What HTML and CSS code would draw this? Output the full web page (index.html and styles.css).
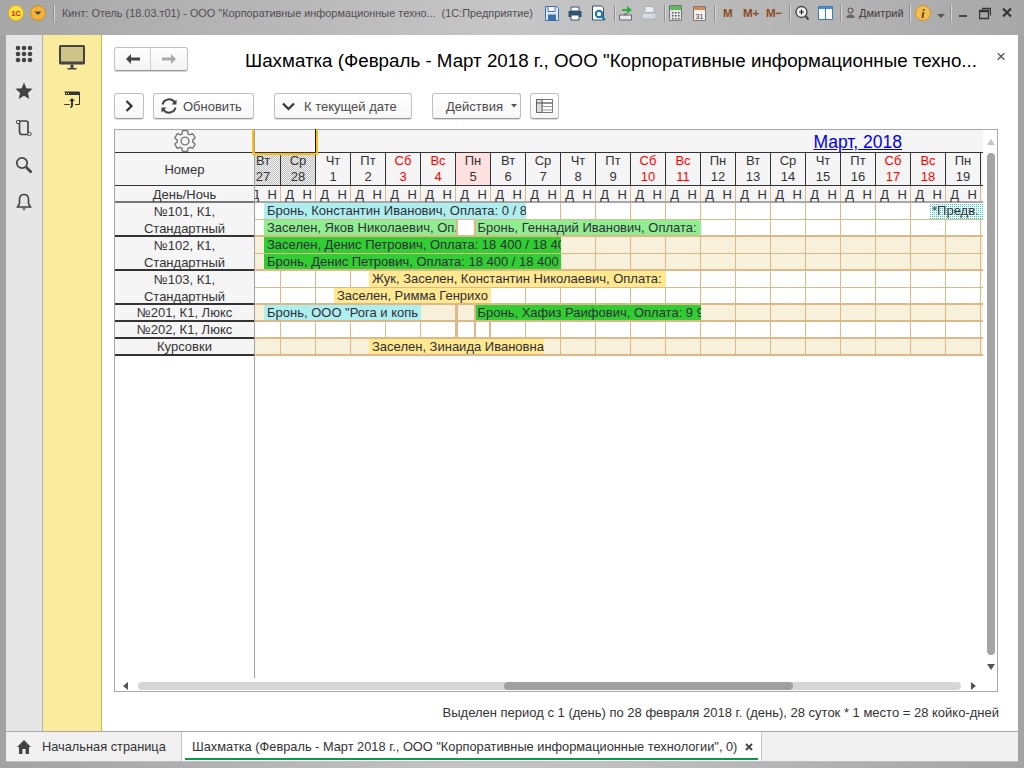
FILE: index.html
```html
<!DOCTYPE html>
<html lang="ru">
<head>
<meta charset="utf-8">
<title>Шахматка</title>
<link rel="stylesheet" href="styles.css">
</head>
<body>
<div class="window">
  <header class="titlebar">
    <svg class="i16" viewBox="0 0 16 16"><circle cx="8" cy="8" r="7.5" fill="#fde23a" stroke="#e0b020"/><text x="8" y="10.5" class="logo1c">1С</text></svg>
    <svg class="i16 m6" viewBox="0 0 16 16"><circle cx="8" cy="8" r="7.5" fill="#f2b33c" stroke="#c98a20"/><path d="M4.5 6.5h7L8 10z" fill="#444"/></svg>
    <span class="sep m7"></span>
    <span class="apptitle">Кинт: Отель (18.03.т01) - ООО "Корпоративные информационные техно...  (1С:Предприятие)</span>
    <svg class="w14" viewBox="0 0 14 16"><path d="M.5 1.500h11l2 2v12H.5z" fill="#dfe8f2" stroke="#3d6fa8"/><path d="M3 1.500h7v5H3z" fill="#fff" stroke="#3d6fa8"/><path d="M3 9.500h8v6H3z" fill="#3d6fa8"/></svg>
    <svg class="w14 m9" viewBox="0 0 14 16"><path d="M3 2h8v4H3z" fill="#fff" stroke="#32536f"/><path d="M.5 6h13v6H.5z" fill="#32536f"/><path d="M3 10h8v5H3z" fill="#fff" stroke="#32536f"/></svg>
    <svg class="w14 m10" viewBox="0 0 14 16"><path d="M.5 1h9l2 2v12H.5z" fill="#fff" stroke="#32536f"/><circle cx="7" cy="9" r="3.200" fill="#fff" stroke="#1c6ea8" stroke-width="2"/><path d="M9.500 11.500l3.500 3.500" stroke="#1c6ea8" stroke-width="2"/></svg>
    <span class="sep m8"></span>
    <svg class="w15 m3" viewBox="0 0 15 16"><path d="M4 4h5V1l5 4-5 4V6H4z" fill="#2fae3c"/><path d="M1.500 10h12v5h-12z" fill="#e6e6e6" stroke="#667"/><path d="M6 8h3v3H6z" fill="#889"/></svg>
    <svg class="w16 m8" viewBox="0 0 16 16"><path d="M4 1.500h7l2 2v4H4z" fill="#eee" stroke="#aab2bb"/><path d="M1 8h14v6H1z" fill="#d5dae0" stroke="#aab2bb"/></svg>
    <span class="sep m7"></span>
    <svg class="w13 m4" viewBox="0 0 13 16"><path d="M.5.500h12v15H.5z" fill="#e4e4e4" stroke="#777"/><path d="M1 1h11v4H1z" fill="#5fb760"/><path d="M3 7h1.500v1.500H3zM6 7h1.500v1.500H6zM9 7h1.500v1.500H9zM3 10h1.500v1.500H3zM6 10h1.500v1.500H6zM9 10h1.500v1.500H9zM3 13h1.500v1.500H3zM6 13h1.500v1.500H6zM9 13h1.500v1.500H9z" fill="#555"/></svg>
    <svg class="w13 m11" viewBox="0 0 13 16"><path d="M.5 1.500h12v14H.5z" fill="#f4f0ea" stroke="#777"/><path d="M1 2h11v3H1z" fill="#d88a50"/><text x="6.500" y="13.500" class="calnum">31</text></svg>
    <span class="sep m8"></span>
    <span class="mem m8 wm">M</span>
    <span class="mem m10 wmp">M+</span>
    <span class="mem m7 wmp">M−</span>
    <span class="sep m7"></span>
    <svg class="w14 m5" viewBox="0 0 14 16"><circle cx="6.500" cy="7" r="5.500" fill="#eee" stroke="#444" stroke-width="1.300"/><path d="M4 7h5M6.500 4.500v5" stroke="#222" stroke-width="1.200"/><path d="M10.500 11l3 3.500" stroke="#444" stroke-width="2"/></svg>
    <svg class="w15 m9" viewBox="0 0 15 16"><path d="M.5 1.500h14v13H.5z" fill="#fff" stroke="#3a7cb8"/><path d="M1 2h13v2H1z" fill="#4a90cc"/><path d="M7.500 2v12" stroke="#3a7cb8"/></svg>
    <span class="sep m7"></span>
    <svg class="w9 m5" viewBox="0 0 9 12"><circle cx="4.500" cy="3.500" r="2.500" fill="none" stroke="#444"/><path d="M.5 11V9.500l2.500-2h3l2.500 2V11z" fill="#666"/></svg>
    <span class="username m4">Дмитрий</span>
    <span class="sep m5"></span>
    <svg class="w16 m5" viewBox="0 0 16 16"><circle cx="8" cy="8" r="7.500" fill="#f4bf52" stroke="#cf9228"/><text x="8" y="12.500" class="infoi">i</text></svg>
    <svg class="w8 m6" viewBox="0 0 8 16"><path d="M0 9h8L4 13z" fill="#555"/></svg>
    <span class="sep m5"></span>
    <svg class="w8 m8" viewBox="0 0 8 16"><path d="M0 10h8v2H0z" fill="#444"/></svg>
    <svg class="w12 m12" viewBox="0 0 12 16"><path d="M3 3.500h8.500v7" fill="none" stroke="#333" stroke-width="1.300"/><path d="M.5 5.500h9v8h-9z" fill="none" stroke="#333" stroke-width="1.300"/><path d="M.5 6.500h9" stroke="#333" stroke-width="1.500"/></svg>
    <svg class="w10 m11" viewBox="0 0 10 16"><path d="M1 3.500l8 8M9 3.500l-8 8" stroke="#333" stroke-width="2.200"/></svg>
  </header>

  <div class="main">
    <nav class="sections">
      <svg class="sec" viewBox="0 0 18 18"><g fill="#444"><circle cx="3" cy="3" r="2.300"/><circle cx="9" cy="3" r="2.300"/><circle cx="15" cy="3" r="2.300"/><circle cx="3" cy="9" r="2.300"/><circle cx="9" cy="9" r="2.300"/><circle cx="15" cy="9" r="2.300"/><circle cx="3" cy="15" r="2.300"/><circle cx="9" cy="15" r="2.300"/><circle cx="15" cy="15" r="2.300"/></g></svg>
      <svg class="sec" viewBox="0 0 18 18"><path d="M9 .5l2.400 5.800 6.200.5-4.700 4.100 1.400 6.100L9 13.800l-5.300 3.200 1.400-6.100L.4 6.800l6.200-.5z" fill="#444"/></svg>
      <svg class="sec" viewBox="0 0 18 18"><path d="M3 2h8c1.500 0 2 1 2 2v9c0 1.500 1 2.500 2 2.500H7c-1.500 0-2.500-1-2.500-2.500V4C4.500 3 4 2 3 2z" fill="none" stroke="#444" stroke-width="1.700"/><circle cx="3" cy="3" r="1.700" fill="#eee" stroke="#444"/><circle cx="14.500" cy="15" r="1.700" fill="#eee" stroke="#444"/></svg>
      <svg class="sec" viewBox="0 0 18 18"><circle cx="7" cy="7" r="5.200" fill="none" stroke="#444" stroke-width="1.700"/><path d="M11 11l5.500 5.500" stroke="#444" stroke-width="2.600"/></svg>
      <svg class="sec" viewBox="0 0 18 18"><path d="M9 1.500c3 0 4.500 2.300 4.500 5v4l2 3.500h-13l2-3.500v-4c0-2.700 1.500-5 4.500-5z" fill="none" stroke="#444" stroke-width="1.600"/><path d="M7 15.500h4L9 17.500z" fill="#444"/></svg>
    </nav>
    <aside class="panel">
      <svg class="monitor" viewBox="0 0 26 25"><path d="M1.500 0h23A1.500 1.500 0 0 1 26 1.500V18a1.500 1.500 0 0 1-1.500 1.500h-23A1.500 1.500 0 0 1 0 18V1.500A1.500 1.500 0 0 1 1.500 0z" fill="#444"/><path d="M2 2h22v14.500H2z" fill="#cfc488"/><path d="M11.500 19.500h3V23h3v1.500h-9V23h3z" fill="#444"/></svg>
      <svg class="pin" viewBox="0 0 16 18"><path d="M.5 1h15v12.500H11M5.500 13.500H.5z" fill="none" stroke="#333"/><path d="M1 1h14v3H1z" fill="#333"/><path d="M2 2h1v1H2zM4 2h1v1H4z" fill="#fbeb9c"/><path d="M8 7l3 3H9v4c0 2-1 3-3 3v-1c1 0 1-1 1-2v-4H5z" fill="#333"/></svg>
    </aside>
    <main class="content">
      <div class="formhead">
        <div class="navgroup">
          <button class="navbtn navleft"><svg width="14" height="10" viewBox="0 0 14 10"><path d="M0 5l5-5v3.500h9v3H5V10z" fill="#444"/></svg></button>
          <button class="navbtn"><svg width="14" height="10" viewBox="0 0 14 10"><path d="M14 5L9 0v3.500H0v3h9V10z" fill="#aaa"/></svg></button>
        </div>
        <h1 class="formtitle">Шахматка (Февраль - Март 2018 г., ООО "Корпоративные информационные техно...</h1>
        <span class="closex">×</span>
      </div>
      <div class="toolbar">
        <button class="btn b-next"><svg width="9" height="12" viewBox="0 0 9 12"><path d="M1.500 1l5 5-5 5" fill="none" stroke="#333" stroke-width="2.200"/></svg></button>
        <button class="btn b-refresh"><svg width="18" height="18" viewBox="0 0 18 18"><path d="M2.500 7.500A6.800 6.800 0 0 1 14.800 5.500M15.500 10.500A6.800 6.800 0 0 1 3.200 12.500" fill="none" stroke="#444" stroke-width="2"/><path d="M16.500 2.500v5h-5zM1.500 15.500v-5h5z" fill="#444"/></svg><span>Обновить</span></button>
        <button class="btn b-today"><svg width="13" height="9" viewBox="0 0 13 9"><path d="M1 1.500l5.500 5.500L12 1.500" fill="none" stroke="#333" stroke-width="2.200"/></svg><span>К текущей дате</span></button>
        <button class="btn b-actions"><span>Действия</span><svg width="6" height="4" viewBox="0 0 6 4"><path d="M0 0h6L3 3.500z" fill="#555"/></svg></button>
        <button class="btn b-grid"><svg width="17" height="14" viewBox="0 0 17 14"><path d="M.5.500h16v13H.5z" fill="#fff" stroke="#777"/><path d="M.5 4h16M.5 7.500h16M.5 11h16M6 .5v13" stroke="#999"/><path d="M.5.500h5.500v13H.5z" fill="#ddd" stroke="#666"/><path d="M.5 4h16" stroke="#555"/></svg></button>
      </div>

      <section class="grid">
        <div class="side">
          <div class="strip gear"><svg width="26" height="26" viewBox="0 0 24 24"><path d="M19.140 12.940c.04-.3.06-.61.06-.94 0-.32-.02-.64-.07-.94l2.030-1.580a.49.49 0 0 0 .12-.61l-1.920-3.320a.488.488 0 0 0-.59-.22l-2.390.96c-.5-.38-1.030-.7-1.620-.94l-.36-2.540a.484.484 0 0 0-.48-.41h-3.840c-.24 0-.43.17-.47.41l-.36 2.540c-.59.24-1.130.57-1.620.94l-2.390-.96c-.22-.08-.47 0-.59.22L2.740 8.870c-.12.21-.08.47.12.61l2.030 1.580c-.05.3-.09.63-.09.94s.02.64.07.94l-2.030 1.580a.49.49 0 0 0-.12.61l1.920 3.320c.12.22.37.29.59.22l2.390-.96c.5.38 1.030.7 1.620.94l.36 2.540c.05.24.24.41.48.41h3.840c.24 0 .44-.17.47-.41l.36-2.540c.59-.24 1.130-.56 1.620-.94l2.390.96c.22.08.47 0 .59-.22l1.920-3.320c.12-.22.07-.47-.12-.61l-2.010-1.580z" fill="none" stroke="#777" stroke-width="1.300"/><circle cx="12" cy="12" r="3.600" fill="none" stroke="#777" stroke-width="1.300"/></svg></div>
          <div class="sidehead">Номер</div>
          <div class="sidedn">День/Ночь</div>
          <div class="room r2">№101, К1,<br>Стандартный</div>
          <div class="room r2">№102, К1,<br>Стандартный</div>
          <div class="room r2">№103, К1,<br>Стандартный</div>
          <div class="room">№201, К1, Люкс</div>
          <div class="room">№202, К1, Люкс</div>
          <div class="room">Курсовки</div>
        </div>

        <div class="chart">
          <div class="strip monthstrip"><a class="month" href="#">Март, 2018</a></div>
          <div class="days">
            <div class="day hatch">Вт<br>27</div>
            <div class="day hatch">Ср<br>28</div>
            <div class="day">Чт<br>1</div>
            <div class="day">Пт<br>2</div>
            <div class="day red">Сб<br>3</div>
            <div class="day red">Вс<br>4</div>
            <div class="day today">Пн<br>5</div>
            <div class="day">Вт<br>6</div>
            <div class="day">Ср<br>7</div>
            <div class="day">Чт<br>8</div>
            <div class="day">Пт<br>9</div>
            <div class="day red">Сб<br>10</div>
            <div class="day red">Вс<br>11</div>
            <div class="day">Пн<br>12</div>
            <div class="day">Вт<br>13</div>
            <div class="day">Ср<br>14</div>
            <div class="day">Чт<br>15</div>
            <div class="day">Пт<br>16</div>
            <div class="day red">Сб<br>17</div>
            <div class="day red">Вс<br>18</div>
            <div class="day">Пн<br>19</div>
            <div class="day"></div>
          </div>
          <div class="dn">
            <span>Д</span><span>Н</span><span>Д</span><span>Н</span><span>Д</span><span>Н</span><span>Д</span><span>Н</span><span>Д</span><span>Н</span><span>Д</span><span>Н</span><span>Д</span><span>Н</span><span>Д</span><span>Н</span><span>Д</span><span>Н</span><span>Д</span><span>Н</span><span>Д</span><span>Н</span><span>Д</span><span>Н</span><span>Д</span><span>Н</span><span>Д</span><span>Н</span><span>Д</span><span>Н</span><span>Д</span><span>Н</span><span>Д</span><span>Н</span><span>Д</span><span>Н</span><span>Д</span><span>Н</span><span>Д</span><span>Н</span><span>Д</span><span>Н</span>
          </div>
          <div class="row">
            <div class="bar cyan" style="grid-column:2/17">Бронь, Константин Иванович, Оплата: 0 / 8</div>
            <div class="bar dotted" style="grid-column:40/45">*Предв.</div>
          </div>
          <div class="row end">
            <div class="bar lime" style="grid-column:2/13">Заселен, Яков Николаевич, Оп.</div>
            <div class="box" style="grid-column:13/14"></div>
            <div class="bar lime edge" style="grid-column:14/27">Бронь, Геннадий Иванович, Оплата:</div>
          </div>
          <div class="row cream">
            <div class="bar green" style="grid-column:2/19">Заселен, Денис Петрович, Оплата: 18 400 / 18 40</div>
          </div>
          <div class="row cream end">
            <div class="bar green" style="grid-column:2/19">Бронь, Денис Петрович, Оплата: 18 400 / 18 400</div>
          </div>
          <div class="row">
            <div class="bar yellow" style="grid-column:8/25">Жук, Заселен, Константин Николаевич, Оплата: (</div>
          </div>
          <div class="row end">
            <div class="bar yellow" style="grid-column:6/15">Заселен, Римма Генрихо</div>
          </div>
          <div class="row cream end">
            <div class="bar cyan" style="grid-column:2/11">Бронь, ООО "Рога и копь</div>
            <div class="box" style="grid-column:13/14"></div>
            <div class="bar green edge" style="grid-column:14/27">Бронь, Хафиз Раифович, Оплата: 9 9</div>
          </div>
          <div class="row end">
            <div class="box" style="grid-column:13/14"></div>
            <div class="box wide" style="grid-column:14/15"></div>
          </div>
          <div class="row cream end">
            <div class="bar yellow" style="grid-column:8/18">Заселен, Зинаида Ивановна</div>
          </div>
        </div>

        <div class="vscroll">
          <svg width="8" height="6" viewBox="0 0 8 6"><path d="M4 0l4 6H0z" fill="#c4c4c4"/></svg>
          <div class="vthumb"></div>
          <svg width="8" height="6" viewBox="0 0 8 6"><path d="M4 6L0 0h8z" fill="#555"/></svg>
        </div>

        <div class="hscroll">
          <svg width="5" height="8" viewBox="0 0 5 8"><path d="M0 4l5-4v8z" fill="#555"/></svg>
          <div class="htrack"><div class="hthumb"></div></div>
          <svg width="5" height="8" viewBox="0 0 5 8"><path d="M5 4L0 0v8z" fill="#555"/></svg>
        </div>

        <div class="selection"></div>
      </section>

      <p class="status">Выделен период с 1 (день) по 28 февраля 2018 г. (день), 28 суток * 1 место = 28 койко-дней</p>
    </main>
  </div>

  <footer class="tabs">
    <div class="tab home"><svg width="14" height="14" viewBox="0 0 14 14"><path d="M7 0l7 7h-2v7H8.500V9h-3v5H2V7H0z" fill="#444"/></svg><span>Начальная страница</span></div>
    <div class="tab active"><span>Шахматка (Февраль - Март 2018 г., ООО "Корпоративные информационные технологии", 0)</span><svg width="8" height="8" viewBox="0 0 8 8"><path d="M1 1l6 6M7 1L1 7" stroke="#444" stroke-width="1.800"/></svg></div>
  </footer>
</div>
</body>
</html>
```

FILE: styles.css
```css
* { box-sizing: border-box; }
html, body { margin: 0; padding: 0; }
body { font-family: "Liberation Sans", Arial, sans-serif; font-size: 13px; color: #333; overflow: hidden; }
svg { display: block; flex: none; }

.window { width: 1024px; height: 768px; display: flex; flex-direction: column; padding-bottom: 6px; background: linear-gradient(90deg, #a2a2a2, #c4c4c4 45%, #c0c0c0 60%, #a4a4a4); }

.titlebar { height: 35px; flex: none; display: flex; align-items: center; padding: 0 0 9px 8px; background: linear-gradient(90deg, #a6a6a6, #c6c6c6 50%, #a8a8a8); }
.i16 { width: 16px; height: 16px; }
.w8 { width: 8px; height: 16px; } .w9 { width: 9px; height: 12px; } .w10 { width: 10px; height: 16px; }
.w12 { width: 12px; height: 16px; } .w13 { width: 13px; height: 16px; } .w14 { width: 14px; height: 16px; }
.w15 { width: 15px; height: 16px; } .w16 { width: 16px; height: 16px; }
.m3 { margin-left: 3px; } .m4 { margin-left: 4px; } .m5 { margin-left: 5px; } .m6 { margin-left: 6px; }
.m7 { margin-left: 7px; } .m8 { margin-left: 8px; } .m9 { margin-left: 9px; } .m10 { margin-left: 10px; }
.m11 { margin-left: 11px; } .m12 { margin-left: 12px; }
.sep { width: 1px; height: 17px; background: #8e8e8e; flex: none; box-shadow: 1px 0 0 #d8d8d8; }
.logo1c { font: bold 7.5px "Liberation Sans", sans-serif; fill: #d8201c; text-anchor: middle; }
.calnum { font: 7px "Liberation Sans", sans-serif; fill: #333; text-anchor: middle; }
.infoi { font: italic bold 12px "Liberation Serif", serif; fill: #5a3d10; text-anchor: middle; }
.apptitle { width: 483px; margin-left: 8px; flex: none; font-size: 10.900px; color: #4f4f4f; white-space: pre; }
.mem { flex: none; font-size: 11.500px; font-weight: bold; color: #8c4a22; }
.wm { width: 10px; } .wmp { width: 16px; }
.username { width: 45px; flex: none; font-size: 11px; color: #3c3c3c; white-space: nowrap; }

.main { flex: 1; min-height: 0; display: flex; padding: 0 6px; }
.sections { width: 37px; flex: none; display: flex; flex-direction: column; align-items: center; gap: 19px; padding: 10px 1px 0 0; background: #e6e6e6; border-right: 1px solid #a9b0b8; }
.sec { width: 18px; height: 18px; }
.panel { width: 59px; flex: none; display: flex; flex-direction: column; align-items: center; padding: 10px 1px 0 0; background: #fbeb9c; border-right: 1px solid #c9b640; }
.monitor { width: 26px; height: 25px; }
.pin { width: 16px; height: 18px; margin-top: 21px; }

.content { flex: 1; min-width: 0; background: #fff; padding: 12px 20px 0 12px; display: flex; flex-direction: column; }
.formhead { height: 24px; display: flex; align-items: center; }
.navgroup { width: 74px; height: 24px; flex: none; display: flex; border: 1px solid #c0c0c0; border-bottom-color: #999; border-radius: 3px; background: linear-gradient(#fff, #f4f4f4); box-shadow: 0 1px 0 #d4d4d4; }
.navbtn { width: 36px; padding: 0; border: 0; background: none; display: flex; align-items: center; justify-content: center; font: inherit; }
.navleft { border-right: 1px solid #cfcfcf; }
.formtitle { margin: 3px 0 0 57px; flex: none; width: 737px; font-size: 18.750px; font-weight: normal; line-height: 26px; color: #000; white-space: nowrap; }
.closex { margin-left: 14px; margin-top: -5px; font-size: 17px; line-height: 16px; color: #555; }

.toolbar { height: 26px; margin-top: 22px; flex: none; display: flex; }
.btn { height: 26px; padding: 0; flex: none; display: flex; align-items: center; font: 13px "Liberation Sans", sans-serif; color: #4a4a4a; border: 1px solid #c0c0c0; border-bottom-color: #999; border-radius: 3px; background: linear-gradient(#fff, #f6f6f6); box-shadow: 0 1px 0 #dcdcdc; }
.b-next { width: 30px; justify-content: center; }
.b-refresh { width: 101px; margin-left: 9px; padding-left: 6px; gap: 5px; }
.b-today { width: 138px; margin-left: 20px; padding-left: 7px; gap: 9px; }
.b-actions { width: 89px; margin-left: 20px; padding-left: 13px; gap: 8px; }
.b-grid { width: 29px; margin-left: 9px; justify-content: center; }

.grid { position: relative; width: 884px; height: 563px; margin-top: 10px; flex: none; border: 1px solid #a8a8a8; display: grid; grid-template-columns: 140px 728px 14px; grid-template-rows: 548px 13px; }
.side { border-right: 1px solid #a0a0a0; }
.strip { height: 22px; background: #f5f5f5; }
.gear { display: flex; align-items: center; justify-content: center; }
.sidehead { height: 33px; background: #f5f5f5; border-top: 1px solid #333; text-align: center; line-height: 33px; }
.sidedn { height: 18px; background: #f5f5f5; border-top: 1px solid #333; border-bottom: 2px solid #777; text-align: center; line-height: 17px; }
.room { height: 17px; background: #f5f5f5; border-bottom: 2px solid #333; text-align: center; line-height: 16px; white-space: nowrap; }
.r2 { height: 34px; line-height: 17px; }

.chart { min-width: 0; overflow: hidden; }
.monthstrip { text-align: right; padding-right: 81px; }
.month { font-size: 17.500px; line-height: 24px; color: #0000ee; text-decoration: underline; }
.days { height: 33px; width: 780px; margin-left: -9px; display: flex; border-top: 1px solid #333; background: #f5f5f5; }
.day { width: 35px; flex: none; border-right: 1px solid #333; text-align: center; line-height: 16px; }
.red { color: #f00; }
.hatch { background: repeating-conic-gradient(#bdbdbd 0 25%, #f5f5f5 0 50%) 0 0 / 2px 2px; }
.today { background: #fde1e1; }
.dn { height: 18px; width: 780px; margin-left: -9px; display: grid; grid-template-columns: repeat(44, 17.500px); border-top: 1px solid #333; border-bottom: 2px solid #a8a8a8; background: #f5f5f5 repeating-linear-gradient(90deg, transparent 0 34px, #deb887 34px 35px); line-height: 17px; text-align: center; }
.row { height: 17px; width: 780px; margin-left: -9px; display: grid; grid-template-columns: repeat(44, 17.500px); border-bottom: 1px solid #deb887; background: repeating-linear-gradient(90deg, transparent 0 34px, #deb887 34px 35px) #fff; }
.end { border-bottom-width: 2px; }
.cream { background-color: #f7f1dc; }
.bar { min-width: 0; overflow: hidden; padding-left: 3.500px; font-size: 13px; line-height: 16px; white-space: nowrap; color: #2e2e3a; }
.cyan { background: #afeeee; }
.lime { background: #90ee90; }
.green { background: #32cd32; }
.yellow { background: #ffe88f; }
.dotted { background: repeating-linear-gradient(90deg, #fff 0 1px, transparent 1px 2px), repeating-linear-gradient(#fff 0 1px, #20d8c8 1px 2px); }
.edge { border-left: 2px solid #deb887; padding-left: 2px; }
.box { border-left: 2px solid #deb887; background: #fff; }
.cream .box { background: #f7f1dc; }
.wide { border-right: 2px solid #deb887; }

.vscroll { grid-row: 1 / 3; grid-column: 3; display: flex; flex-direction: column; align-items: center; padding: 9px 0 21px 2px; }
.vthumb { width: 8px; flex: 1; margin: 8px 0 9px; background: #a4a4a4; border-radius: 4px; }
.hscroll { grid-column: 1 / 3; display: flex; align-items: center; padding: 3px 0 0 8px; }
.htrack { width: 823px; height: 8px; margin: 0 10px 0 10px; background: #d6d6d6; border-radius: 4px; }
.hthumb { width: 289px; height: 8px; margin-left: 366px; background: #a0a0a0; border-radius: 4px; }
.selection { position: absolute; left: 137px; top: -1px; width: 66px; height: 26px; border: solid #fbbf10; border-width: 0 2px 2px; box-shadow: inset -1px 0 0 #111; }

.status { margin: 13px -1px 0 0; text-align: right; line-height: 15px; color: #333; white-space: nowrap; }

.tabs { height: 31px; flex: none; margin: 0 6px; display: flex; background: #f0f0f0; border-top: 1px solid #a8a8a8; border-bottom: 1px solid #c0c0c0; font-size: 12.800px; }
.tab { height: 100%; flex: none; display: flex; align-items: center; white-space: nowrap; }
.home { width: 176px; padding-left: 11px; gap: 11px; border-right: 1px solid #c4c4c4; }
.active { width: 580px; padding-left: 10px; gap: 8px; background: #fff; border-right: 1px solid #c4c4c4; position: relative; }
.active::after { content: ""; position: absolute; left: 3px; right: 3px; bottom: 1px; height: 2px; background: #0a9a4a; }
```
